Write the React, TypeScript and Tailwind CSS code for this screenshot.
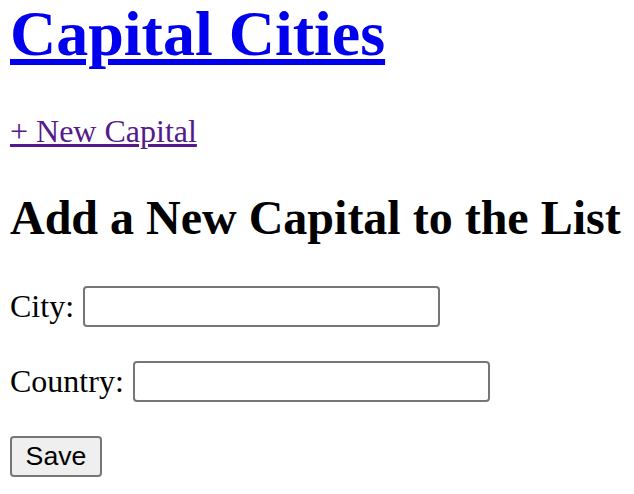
const fieldRows = [
  { label: 'City:', name: 'city' },
  { label: 'Country:', name: 'country' },
];

const App = function() {
  return (
    <div className='pl-[10px] font-["Liberation_Serif",serif] text-[32px] text-black bg-white min-h-[494px]'>
      <h1 className='text-[64px] font-bold leading-[68px] mb-[45px]'>
        <a href='#' className='text-[#0000ee] underline'>Capital Cities</a>
      </h1>
      <p className='leading-[37px]'>
        <a href='#' className='text-[#551a8b] underline'>+ New Capital</a>
      </p>
      <h2 className='mt-[40px] text-[48px] font-bold leading-[55px] whitespace-nowrap'>Add a New Capital to the List</h2>
      <form className='mt-[41px] flex flex-col gap-[34px]' onSubmit={(event) => event.preventDefault()}>
        {fieldRows.map((row) => (
          <div key={row.name} className='flex items-center h-[41px] gap-[9px]'>
            <label htmlFor={row.name} className='leading-[37px]'>{row.label}</label>
            <input
              id={row.name}
              name={row.name}
              type='text'
              className='w-[357px] h-[41px] border-2 border-[#767676] rounded-[4px] bg-white px-1 text-[26px] outline-none'
            />
          </div>
        ))}
        <div className='flex h-[41px]'>
          <button
            type='submit'
            className='w-[92px] h-[41px] border-2 border-[#767676] rounded-[4px] bg-[#efefef] text-[26.67px] leading-none text-black font-["Liberation_Sans",Arial,sans-serif]'
          >
            Save
          </button>
        </div>
      </form>
    </div>
  );
};

export default App;
